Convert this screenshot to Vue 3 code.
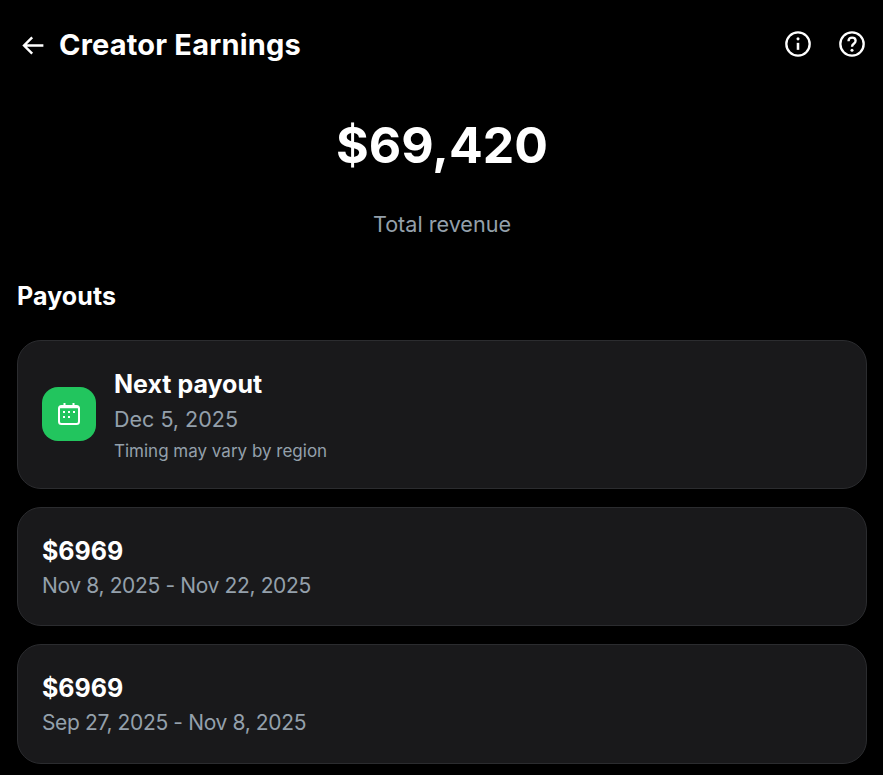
<template>
  <div class="page">
    <header class="topbar">
      <div class="title-wrap">
        <svg class="back" viewBox="0 0 24 24" width="29" height="29">
          <path d="M7.414 13l5.043 5.04-1.414 1.42L3.586 12l7.457-7.46 1.414 1.42L7.414 11H21v2H7.414z" fill="#fff" />
        </svg>
        <h1>Creator Earnings</h1>
      </div>
      <div class="top-icons">
        <svg viewBox="0 0 24 24" width="28" height="28" fill="none" stroke="#fff" stroke-width="2">
          <circle cx="12" cy="12" r="10" />
          <path d="M12 11v6" stroke-width="2.2" />
          <circle cx="12" cy="7.6" r="1.3" fill="#fff" stroke="none" />
        </svg>
        <svg viewBox="0 0 24 24" width="28" height="28" fill="none" stroke="#fff" stroke-width="2">
          <circle cx="12" cy="12" r="10" />
          <path d="M9 9.6c0-1.9 1.4-3 3.1-3 1.700 0 3 1.100 3 2.700 0 2.500-3.100 2.500-3.100 5" stroke-width="2" />
          <circle cx="12" cy="17.300" r="1.300" fill="#fff" stroke="none" />
        </svg>
      </div>
    </header>

    <section class="total">
      <div class="amount">$69,420</div>
      <div class="total-label">Total revenue</div>
    </section>

    <h2>Payouts</h2>

    <div class="cards">
      <div class="card next">
        <div class="cal-box">
          <svg viewBox="0 0 24 24" width="24" height="24" fill="none" stroke="#fff" stroke-width="2">
            <rect x="2" y="4" width="20" height="18" rx="2.500" />
            <path d="M7.500 1v4M16.500 1v4" />
            <path d="M2 5.500h20" stroke-width="1.500" />
            <path d="M6 10h2M11 10h2M16 10h2M6 15h2M11 15h2" />
          </svg>
        </div>
        <div class="next-text">
          <div class="next-title">Next payout</div>
          <div class="next-date">Dec 5, 2025</div>
          <div class="next-note">Timing may vary by region</div>
        </div>
      </div>

      <div v-for="p in payouts" :key="p.range" class="card">
        <div class="pay-amount">{{ p.amount }}</div>
        <div class="pay-range">{{ p.range }}</div>
      </div>
    </div>
  </div>
</template>

<script setup>
const payouts = [
  { amount: '$6969', range: 'Nov 8, 2025 - Nov 22, 2025' },
  { amount: '$6969', range: 'Sep 27, 2025 - Nov 8, 2025' },
]
</script>

<style>
html,
body {
  background: #000;
}
</style>

<style scoped>
.page {
  width: 883px;
  height: 775px;
  overflow: hidden;
  background: #000;
  color: #fff;
  font-family: Inter, "Liberation Sans", sans-serif;
  box-sizing: border-box;
  padding: 0 16px 0 17px;
}
.topbar {
  height: 90px;
  display: flex;
  align-items: center;
  justify-content: space-between;
}
.title-wrap {
  display: flex;
  align-items: center;
  gap: 12px;
  padding-left: 1px;
}
h1 {
  margin: -2px 0 0;
  font-size: 29px;
  font-weight: 700;
  letter-spacing: 0.2px;
}
.top-icons {
  display: flex;
  gap: 26px;
  margin-top: -2px;
  margin-right: 1px;
}
.total {
  text-align: center;
}
.amount {
  font-size: 50px;
  font-weight: 700;
  line-height: 60px;
  margin-top: 25px;
}
.total-label {
  margin-top: 34px;
  font-size: 21.6px;
  line-height: 30px;
  color: #94a0ab;
}
h2 {
  margin: 42px 0 0;
  font-size: 25px;
  line-height: 30px;
  font-weight: 700;
  letter-spacing: 0.1px;
}
.cards {
  margin-top: 29px;
  display: flex;
  flex-direction: column;
  gap: 18px;
}
.card {
  background: #19191b;
  border: 1px solid #2b2c2f;
  border-radius: 24px;
  padding: 28px 24px 0;
  height: 119px;
  box-sizing: border-box;
}
.card:last-child {
  height: 120px;
}
.next {
  height: 149px;
  padding-top: 0;
  display: flex;
  align-items: center;
  gap: 18px;
}
.cal-box {
  width: 54px;
  height: 54px;
  margin-top: -1px;
  border-radius: 16px;
  background: #22c55e;
  display: flex;
  align-items: center;
  justify-content: center;
}
.next-text {
  margin-top: 2px;
}
.next-title {
  font-size: 25px;
  line-height: 30px;
  font-weight: 700;
}
.next-date {
  margin-top: 6px;
  font-size: 21.500px;
  line-height: 28px;
  color: #94a0ab;
}
.next-note {
  margin-top: 7px;
  font-size: 17px;
  line-height: 22px;
  color: #94a0ab;
}
.pay-amount {
  font-size: 25px;
  line-height: 30px;
  font-weight: 700;
}
.pay-range {
  margin-top: 6px;
  font-size: 21px;
  line-height: 28px;
  letter-spacing: -0.36px;
  color: #94a0ab;
}
</style>
